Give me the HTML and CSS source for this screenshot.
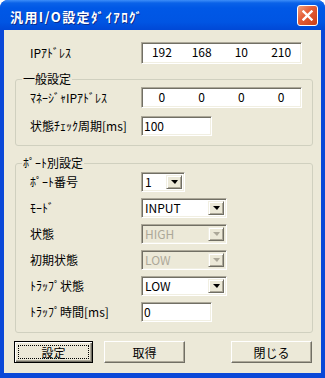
FILE: index.html
```html
<!DOCTYPE html>
<html lang="ja">
<head>
  <meta charset="UTF-8">
  <title>汎用I/O設定ﾀﾞｲｱﾛｸﾞ</title>
  <link rel="stylesheet" href="styles.css">
</head>
<body>
  <div class="window">
    <!-- タイトルバー -->
    <div class="titlebar">
      <span class="title">汎用I/O設定ﾀﾞｲｱﾛｸﾞ</span>
      <span class="close">
        <svg width="11" height="11" viewBox="0 0 11 11">
          <path d="M1.5 1.5 L9.5 9.5 M9.5 1.5 L1.5 9.5" stroke="#fff" stroke-width="2.4" stroke-linecap="square"/>
        </svg>
      </span>
    </div>

    <div class="client">
      <div class="row row-ip">
        <span class="label">IPｱﾄﾞﾚｽ</span>
        <div class="field ip ip-tall"><span>192</span><span>168</span><span>10</span><span>210</span></div>
      </div>

      <!-- 一般設定 -->
      <fieldset class="group group-general">
        <legend>一般設定</legend>
        <div class="rows rows-general">
          <div class="row row-mgr">
            <span class="label">ﾏﾈｰｼﾞｬIPｱﾄﾞﾚｽ</span>
            <div class="field ip"><span>0</span><span>0</span><span>0</span><span>0</span></div>
          </div>
          <div class="row">
            <span class="label">状態ﾁｪｯｸ周期[ms]</span>
            <div class="field text">100</div>
          </div>
        </div>
      </fieldset>

      <!-- ポート別設定 -->
      <fieldset class="group group-port">
        <legend>ﾎﾟｰﾄ別設定</legend>
        <div class="rows rows-port">
          <div class="row">
            <span class="label">ﾎﾟｰﾄ番号</span>
            <div class="combo combo-small"><span class="value">1</span><span class="drop"><i class="arrow"></i></span></div>
          </div>
          <div class="row">
            <span class="label">ﾓｰﾄﾞ</span>
            <div class="combo"><span class="value">INPUT</span><span class="drop"><i class="arrow"></i></span></div>
          </div>
          <div class="row">
            <span class="label">状態</span>
            <div class="combo disabled"><span class="value">HIGH</span><span class="drop"><i class="arrow"></i></span></div>
          </div>
          <div class="row">
            <span class="label">初期状態</span>
            <div class="combo disabled"><span class="value">LOW</span><span class="drop"><i class="arrow"></i></span></div>
          </div>
          <div class="row">
            <span class="label">ﾄﾗｯﾌﾟ状態</span>
            <div class="combo"><span class="value">LOW</span><span class="drop"><i class="arrow"></i></span></div>
          </div>
          <div class="row">
            <span class="label">ﾄﾗｯﾌﾟ時間[ms]</span>
            <div class="field text">0</div>
          </div>
        </div>
      </fieldset>

      <div class="buttons">
        <div class="btn default"><span class="focus">設定</span></div>
        <div class="btn">取得</div>
        <div class="btn btn-close">閉じる</div>
      </div>
    </div>
  </div>
</body>
</html>
```

FILE: styles.css
```css
*{
  box-sizing: border-box;
}
body{
  margin: 0;
  background: #fff;
  font-family: "Noto Sans CJK JP", "DejaVu Sans", sans-serif;
  font-size: 12px;
  color: #000;
}
.window{
  width: 325px;
  height: 378px;
  background: #0a48d8;
  border-radius: 8px 8px 0 0;
  overflow: hidden;
}

/* タイトルバー */
.titlebar{
  height: 30px;
  display: flex;
  align-items: center;
  padding: 2px 7px 0 10px;
  background: linear-gradient(#3d8ef8 0, #0a62e8 3px, #0058e6 8px, #0055e3 22px, #0048d6 30px);
}
.title{
  flex: 1;
  color: #fff;
  font-weight: bold;
  font-size: 13px;
  letter-spacing: 1.4px;
  text-shadow: 1px 1px 0 #0b2b8c;
}
.close{
  width: 21px;
  height: 21px;
  margin-top: -2px;
  display: flex;
  align-items: center;
  justify-content: center;
  border: 1px solid #fff;
  border-radius: 3px;
  background: linear-gradient(135deg, #f0a07c 0, #e5603a 40%, #cc3e16 100%);
}

/* クライアント領域 */
.client{
  height: 343px;
  margin: 0 4px;
  padding-top: 12px;
  background: #ece9d8;
}
.row{
  display: flex;
  align-items: center;
  height: 20px;
}
.label{
  width: 111px;
  line-height: 14px;
}
.row-ip{
  height: 22px;
  padding-left: 26px;
}
.rows{
  display: flex;
  flex-direction: column;
  margin-left: 8px;
}
.rows-general{
  gap: 8px;
}
.row-mgr{
  height: 21px;
}
.rows-port{
  gap: 6px;
}

/* グループ */
.group{
  margin: 8px 8px 0 11px;
  padding: 1px 6px 9px;
  border: 1px solid #d0d0bf;
  border-radius: 3px;
  min-inline-size: 0;
}
.group legend{
  padding: 0 1px;
  line-height: 14px;
}
.group-port{
  margin-top: 10px;
  padding-top: 2px;
  padding-bottom: 10px;
}

/* 入力欄 */
.field, .combo{
  height: 100%;
  background: #fff;
  border: 1px solid;
  border-color: #aca899 #fff #fff #aca899;
  box-shadow: inset 1px 1px 0 #716f64, inset -1px -1px 0 #f1efe2;
}
.ip{
  width: 161px;
  display: flex;
}
.ip span{
  flex: 1;
  text-align: center;
  line-height: 18px;
}
.text{
  width: 71px;
  padding-left: 2px;
  line-height: 18px;
}

/* コンボボックス */
.combo{
  width: 86px;
  display: flex;
  padding: 2px;
}
.combo-small{
  width: 44px;
}
.combo .value{
  flex: 1;
  line-height: 14px;
  padding-left: 1px;
}
.combo .drop{
  width: 16px;
  display: flex;
  align-items: center;
  justify-content: center;
  background: #ece9d8;
  border: 1px solid;
  border-color: #f1efe2 #716f64 #716f64 #f1efe2;
  box-shadow: inset 1px 1px 0 #fff, inset -1px -1px 0 #aca899;
}
.arrow{
  width: 0;
  height: 0;
  border-left: 4px solid transparent;
  border-right: 3px solid transparent;
  border-top: 4px solid #000;
}
.combo.disabled{
  background: #ece9d8;
}
.combo.disabled .value{
  color: #aca899;
}
.combo.disabled .arrow{
  border-top-color: #aca899;
}

/* ボタン */
.buttons{
  display: flex;
  gap: 11px;
  margin-top: 8px;
  padding: 0 9px 0 10px;
}
.btn{
  width: 81px;
  height: 22px;
  display: flex;
  align-items: center;
  justify-content: center;
  background: #ece9d8;
  border: 1px solid;
  border-color: #fff #716f64 #716f64 #fff;
  box-shadow: inset -1px -1px 0 #aca899;
}
.btn.default{
  width: 79px;
  border: 1px solid #000;
  box-shadow: inset 1px 1px 0 #fff, inset -1px -1px 0 #716f64, inset -2px -2px 0 #aca899;
  padding: 3px;
}
.btn .focus{
  flex: 1;
  height: 100%;
  display: flex;
  align-items: center;
  justify-content: center;
  border: 1px dotted #000;
}
.btn-close{
  margin-left: auto;
}
```
